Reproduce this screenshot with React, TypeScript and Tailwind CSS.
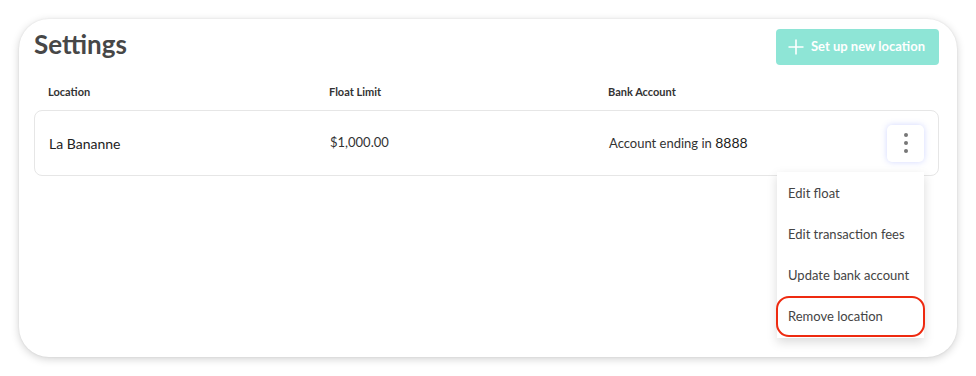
import React from "react";

const font = { fontFamily: "Lato, 'Open Sans', Arial, sans-serif" };

export default function App() {
  return (
    <div className="w-[976px] h-[376px] bg-white p-[19px]" style={font}>
      <div className="relative w-[938px] h-[338px] rounded-[30px] bg-white shadow-[0_2px_8px_rgba(0,0,0,0.18),0_0_2px_rgba(0,0,0,0.08)] pl-[15px] pr-[18px] pt-[10px]">
        <div className="flex items-center justify-between h-[36px]">
          <h1 className="text-[26px] font-bold leading-[32px] text-[#474747] -mt-[6px]">Settings</h1>
          <button className="flex items-center h-[36px] w-[163px] rounded-[4px] bg-[#8ee5d6] pl-[12px] text-white text-[13px] font-bold">
            <svg width="16" height="16" viewBox="0 0 16 16" className="mr-[7px]">
              <path d="M8 0.5v15M0.5 8h15" stroke="white" strokeWidth="1.6" />
            </svg>
            Set up new location
          </button>
        </div>
        <div className="grid grid-cols-[281px_279px_1fr] px-[14px] h-[45px] items-center text-[11px] font-bold text-[#333] pt-[9px]">
          <div>Location</div>
          <div>Float Limit</div>
          <div>Bank Account</div>
        </div>
        <div className="grid grid-cols-[281px_279px_1fr] items-center h-[66px] pl-[14px] pr-[14px] rounded-[8px] border border-[#e6e6e6] text-[#222]">
          <div className="text-[14px]">La Bananne</div>
          <div className="text-[13px] text-[#333]">$1,000.00</div>
          <div className="flex items-center justify-between">
            <div className="text-[13px] text-[#333]">
              Account ending in <span className="text-[14px] text-[#222]">8888</span>
            </div>
            <button className="w-[37px] h-[37px] rounded-[5px] bg-white shadow-[0_0_6px_rgba(90,110,255,0.28)] flex flex-col items-center justify-center gap-[4px]">
              <span className="w-[4px] h-[4px] rounded-full bg-[#777]" />
              <span className="w-[4px] h-[4px] rounded-full bg-[#777]" />
              <span className="w-[4px] h-[4px] rounded-full bg-[#777]" />
            </button>
          </div>
        </div>
        <div className="absolute left-[758px] top-[153px] w-[147px] bg-white shadow-[0_4px_10px_rgba(0,0,0,0.15)] text-[13px] text-[#444] py-[1px]">
          <div className="h-[41px] flex items-center pl-[11px]">Edit float</div>
          <div className="h-[41px] flex items-center pl-[11px]">Edit transaction fees</div>
          <div className="h-[41px] flex items-center pl-[11px]">Update bank account</div>
          <div className="h-[41px] flex items-center rounded-[13px] border-2 border-[#ee2a10] -mx-[1px] pl-[10px]">Remove location</div>
        </div>
      </div>
    </div>
  );
}
